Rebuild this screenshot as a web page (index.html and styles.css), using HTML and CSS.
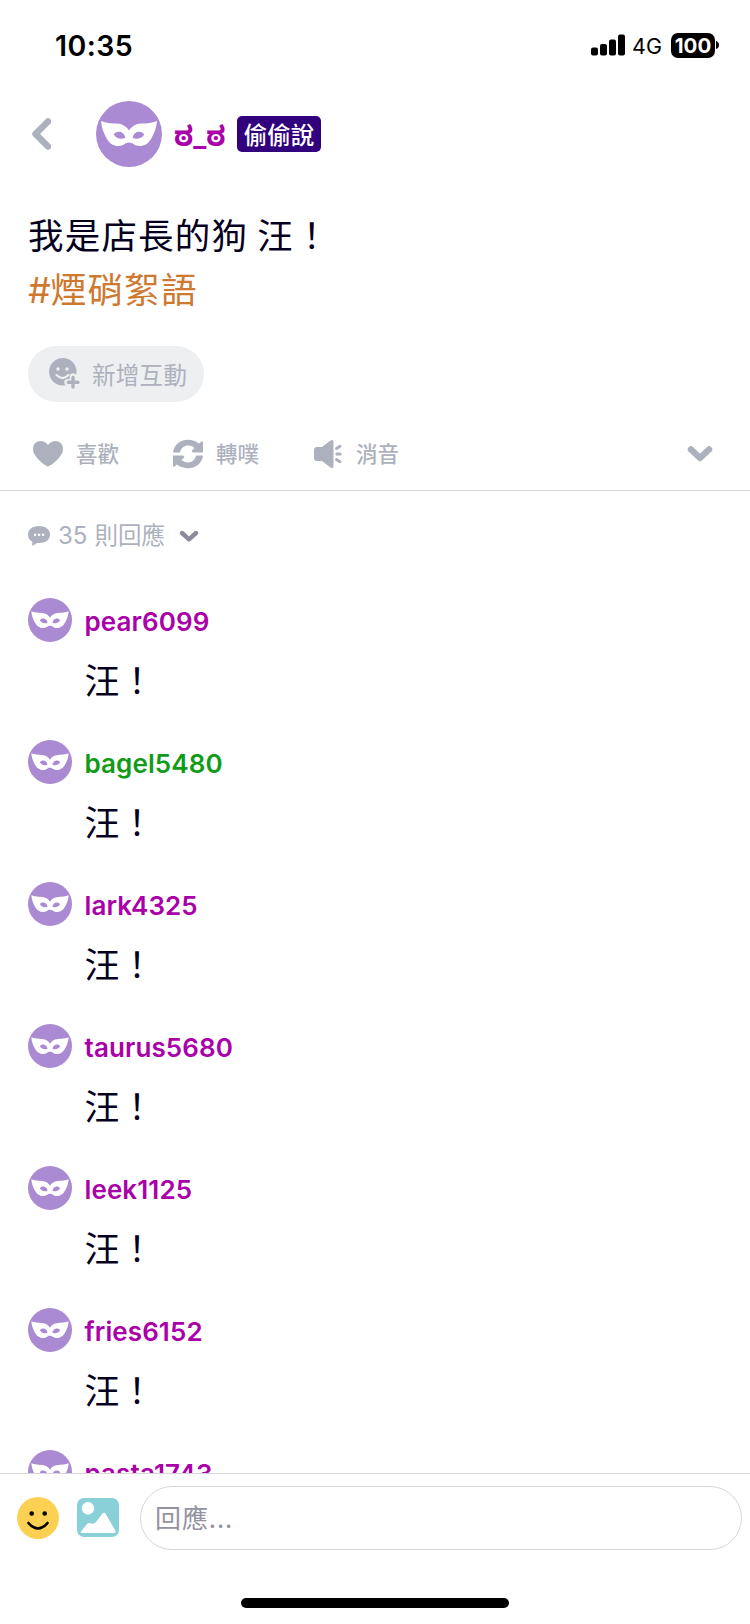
FILE: index.html
```html
<!DOCTYPE html>
<html lang="zh-Hant">
<head>
<meta charset="utf-8">
<title>偷偷說</title>
<link rel="stylesheet" href="styles.css">
</head>
<body>
<svg class="defs" width="0" height="0">
  <symbol id="mask" viewBox="0 0 66 66">
    <circle cx="33" cy="33" r="33" fill="#aa8ad2"/>
    <path fill="#fff" fill-rule="evenodd" d="M5 20C10 22 15 22.500 21 22.500C27 23 31 26 33 29.500C35 26 39 23 45 22.500C51 22.500 56 22 61 20C60.500 27 58 33 55 38C52 43 48 45 44 45C38 45 37 41.500 33 41.500C29 41.500 28 45 22 45C18 45 14 43 11 38C8 33 5.500 27 5 20ZM17.800 33.500C20 29.500 28 29.500 29.300 37C26 38.500 20 38 17.800 33.500ZM48.200 33.500C46 29.500 38 29.500 36.700 37C40 38.500 46 38 48.200 33.500Z"/>
  </symbol>
</svg>
<div class="screen">
  <div class="status">
    <span class="time">10:35</span>
    <div class="status-right">
      <svg class="signal" width="34" height="22" viewBox="0 0 34 22"><rect x="0" y="13.500" width="7" height="8" rx="2"/><rect x="9" y="10" width="7" height="11.500" rx="2"/><rect x="18" y="5.500" width="7" height="16" rx="2"/><rect x="27" y="0.500" width="7" height="21" rx="2"/></svg>
      <span class="net">4G</span>
      <span class="battery">100</span>
      <svg class="cap" width="3" height="8" viewBox="0 0 3 8"><path d="M0 0Q3 1 3 4T0 8Z"/></svg>
    </div>
  </div>

  <header class="header">
    <svg class="back" width="20" height="34" viewBox="0 0 20 34"><path d="M17 4.500L4.500 17L17 29.500"/></svg>
    <svg class="avatar-lg" width="66" height="66"><use href="#mask"/></svg>
    <span class="author">ಠ_ಠ</span>
    <span class="tag">偷偷說</span>
  </header>

  <section class="post">
    <div class="post-text">我是店長的狗 汪！</div>
    <div class="post-text hashtag"><span class="hash">#</span>煙硝絮語</div>
    <div class="chip">
      <svg width="31" height="31" viewBox="0 0 31 31">
        <circle cx="13.800" cy="13.800" r="13.700" fill="#adb1bd"/>
        <circle cx="9" cy="11" r="1.700" fill="#edeff1"/><circle cx="18" cy="11" r="1.700" fill="#edeff1"/>
        <path d="M7.500 17Q13.500 23 19.500 17" fill="none" stroke="#edeff1" stroke-width="2.200" stroke-linecap="round"/>
        <path d="M24 18.500V30M18.500 24.300H30" stroke="#edeff1" stroke-width="6.500" stroke-linecap="round"/>
        <path d="M24 19.500V29M19.300 24.300H29" stroke="#adb1bd" stroke-width="3.400" stroke-linecap="round"/>
      </svg>
      <span>新增互動</span>
    </div>
  </section>

  <div class="actions">
    <div class="action"><svg width="30" height="30" viewBox="0 0 30 30"><path d="M15 27.500C13.500 27.500 0 18.500 0 10C0 1 10.500-.5 15 6C19.500-.5 30 1 30 10C30 18.500 16.500 27.500 15 27.500Z"/></svg><span>喜歡</span></div>
    <div class="action"><svg width="30" height="30" viewBox="0 0 30 30"><path d="M0 13.500C1 5 8 .7 15 .7C19 .7 23 2 26 4.500L28.500 2.500Q30 1.800 30 3.500V13.500H20Q18 13 19 11.500L21.500 9C16 4.500 8.500 6.500 7 13.500ZM30 16.500C29 25 22 29.300 15 29.300C11 29.300 7 28 4 25.500L1.500 27.500Q0 28.200 0 26.500V16.500H10Q12 17 11 18.500L8.500 21C14 25.500 21.500 23.500 23 16.500Z"/></svg><span>轉噗</span></div>
    <div class="action"><svg width="30" height="30" viewBox="-1 0 30 30"><path d="M3 8H8L16.500 1.500Q19.500 0 19.500 3V27Q19.500 30 16.500 28.500L8 22H3Q0 22 0 19V11Q0 8 3 8Z"/><path d="M22.500 9.500L26 7.300M22.800 15H26.200M22.500 20.500L26 22.700" fill="none" stroke="#adb1bd" stroke-width="3" stroke-linecap="round"/></svg><span>消音</span></div>
    <svg class="more" width="26" height="18" viewBox="0 0 26 18"><path d="M4 4.500L13 13L22 4.500"/></svg>
  </div>

  <div class="count">
    <svg width="22" height="20" viewBox="0 0 22 20"><path fill="#adb1bd" d="M11 0C17.500 0 22 3.500 22 8.500S17.500 17 11 17H9L4.300 20V15.700C1.700 14.300 0 12 0 8.500C0 3.500 4.500 0 11 0Z"/><g fill="#fff"><rect x="6" y="7.700" width="2.200" height="2.200"/><rect x="10" y="7.700" width="2.200" height="2.200"/><rect x="14" y="7.700" width="2.200" height="2.200"/></g></svg>
    <span class="count-text"><span class="num">35</span>則回應</span>
    <svg class="sort" width="20" height="12" viewBox="0 0 20 12"><path d="M3 3L10 9.300L17 3"/></svg>
  </div>

  <main class="replies">
    <article class="reply"><svg class="avatar" width="44" height="44"><use href="#mask"/></svg><div class="body"><div class="name">pear6099</div><div class="text">汪！</div></div></article>
    <article class="reply"><svg class="avatar" width="44" height="44"><use href="#mask"/></svg><div class="body"><div class="name green">bagel5480</div><div class="text">汪！</div></div></article>
    <article class="reply"><svg class="avatar" width="44" height="44"><use href="#mask"/></svg><div class="body"><div class="name">lark4325</div><div class="text">汪！</div></div></article>
    <article class="reply"><svg class="avatar" width="44" height="44"><use href="#mask"/></svg><div class="body"><div class="name">taurus5680</div><div class="text">汪！</div></div></article>
    <article class="reply"><svg class="avatar" width="44" height="44"><use href="#mask"/></svg><div class="body"><div class="name">leek1125</div><div class="text">汪！</div></div></article>
    <article class="reply"><svg class="avatar" width="44" height="44"><use href="#mask"/></svg><div class="body"><div class="name">fries6152</div><div class="text">汪！</div></div></article>
    <article class="reply"><svg class="avatar" width="44" height="44"><use href="#mask"/></svg><div class="body"><div class="name">pasta1743</div></div></article>
  </main>

  <footer class="footer">
    <div class="composer">
      <svg width="42" height="42" viewBox="0 0 42 42"><circle cx="21" cy="21" r="21" fill="#fcd053"/><circle cx="14.700" cy="16.500" r="2.300"/><circle cx="27.700" cy="16.500" r="2.300"/><path d="M11.500 26Q21 37 30.500 26" fill="none" stroke="#000" stroke-width="2.600" stroke-linecap="round"/></svg>
      <svg class="photo" width="42" height="39" viewBox="0 0 42 39"><rect width="42" height="39" rx="7" fill="#8ad0d8"/><circle cx="11" cy="10.300" r="6.200" fill="#fff"/><path fill="#fff" d="M4 33.500L10 26Q12 24.500 14 25.500Q17 26.500 19 24L25.500 15.500Q27 14 28.500 15.500L38.500 33Q39 35 37 35H5Q3 35 4 33.500Z"/></svg>
      <div class="input">回應...</div>
    </div>
    <div class="home"></div>
  </footer>
</div>
</body>
</html>
```
FILE: styles.css
```css
* { box-sizing: border-box; }
body {
  margin: 0;
  background: #fff;
  color: #04001e;
  font-family: "Noto Sans CJK TC", sans-serif;
}
svg { display: block; flex: none; }
.defs { position: absolute; }
.screen {
  width: 750px;
  height: 1624px;
  display: flex;
  flex-direction: column;
  overflow: hidden;
}
.status {
  height: 90px;
  display: flex;
  justify-content: space-between;
  align-items: center;
  padding: 0 31px 0 55px;
  color: #000;
  font-family: Inter, sans-serif;
}
.time { padding-top: 1px; font-size: 28.500px; font-weight: 600; line-height: 34px; letter-spacing: 0.4px; }
.status-right { display: flex; align-items: center; }
.net { margin: 2px 9px 0 7px; font-size: 21.500px; line-height: 24px; width: 30px; white-space: nowrap; }
.battery {
  width: 44px;
  height: 25px;
  border-radius: 7px;
  background: #000;
  color: #fff;
  font: 700 20.500px/25px Inter, sans-serif;
  text-align: center;
  letter-spacing: 0;
}
.cap { margin-left: 1px; }
.header {
  height: 88px;
  display: flex;
  align-items: center;
  padding-left: 31px;
}
.back path, .more path, .sort path {
  fill: none;
  stroke: #adb1bd;
  stroke-width: 6.500;
  stroke-linecap: round;
  stroke-linejoin: round;
}
.avatar-lg { margin-left: 45px; }
.author {
  margin-left: 12px;
  width: 53px;
  padding-top: 3px;
  color: #aa00aa;
  font: 700 27.500px/36px Inter, "Noto Sans Kannada", sans-serif;
  white-space: nowrap;
}
.tag {
  margin-left: 10px;
  width: 84px;
  height: 36px;
  border-radius: 5px;
  background: #32007d;
  color: #fff;
  font-size: 23.500px;
  font-weight: 500;
  line-height: 36px;
  text-align: center;
}
.post { padding: 29px 28px 0; }
.post-text {
  font-size: 35.500px;
  line-height: 54px;
  letter-spacing: 1.2px;
}
.hashtag { color: #cf7830; }
.hash { font-family: Inter, sans-serif; font-size: 36px; letter-spacing: 0; line-height: 1; }
.chip {
  width: 176px;
  height: 56px;
  margin-top: 31px;
  border-radius: 28px;
  background: #edeff1;
  color: #adb1bd;
  display: flex;
  align-items: center;
  gap: 12px;
  padding: 0 0 1px 21px;
  font-size: 23.500px;
  letter-spacing: 0.3px;
  line-height: 32px;
}
.actions {
  height: 89px;
  border-bottom: 1px solid #d7d7d9;
  display: flex;
  align-items: center;
  padding: 15px 37px 0 33px;
  fill: #adb1bd;
}
.action {
  width: 140px;
  display: flex;
  align-items: center;
  gap: 13px;
  color: #adb1bd;
  font-size: 21.500px;
  font-weight: 500;
  line-height: 30px;
}
.action span { padding-bottom: 2px; }
.more { margin-left: auto; }
.count {
  height: 89px;
  display: flex;
  align-items: center;
  padding-left: 28px;
  color: #adb1bd;
}
.count-text { margin-left: 8px; padding-bottom: 2px; width: 120px; font-size: 23.500px; line-height: 32px; white-space: nowrap; }
.num { font-family: Inter, sans-serif; font-size: 24px; margin-right: 7px; }
.sort { margin-left: 1px; }
.sort path { stroke: #8c8b9c; stroke-width: 4.400; }
.replies { flex: 1; min-height: 0; overflow: hidden; padding: 18px 28px 0; }
.reply { display: flex; gap: 12.500px; height: 142px; }
.name {
  color: #aa00aa;
  font: 600 26px/32px Inter, sans-serif;
  letter-spacing: 0.1px;
  margin-top: 8px;
}
.green { color: #109c18; }
.text { margin-top: 14px; font-size: 35px; line-height: 54px; }
.footer { height: 151px; border-top: 1px solid #d7d7d9; }
.composer {
  height: 88px;
  display: flex;
  align-items: center;
  padding: 0 8px 0 17px;
}
.photo { margin: 0 0 1px 18px; }
.input {
  flex: 1;
  height: 64px;
  margin-left: 21px;
  border: 1px solid #d7d7d9;
  border-radius: 32px;
  padding-left: 14px;
  color: #93929f;
  font-size: 26px;
  letter-spacing: 0.9px;
  line-height: 59px;
}
.home {
  width: 268px;
  height: 10px;
  margin: 36px auto 0;
  border-radius: 5px;
  background: #000;
}
```
